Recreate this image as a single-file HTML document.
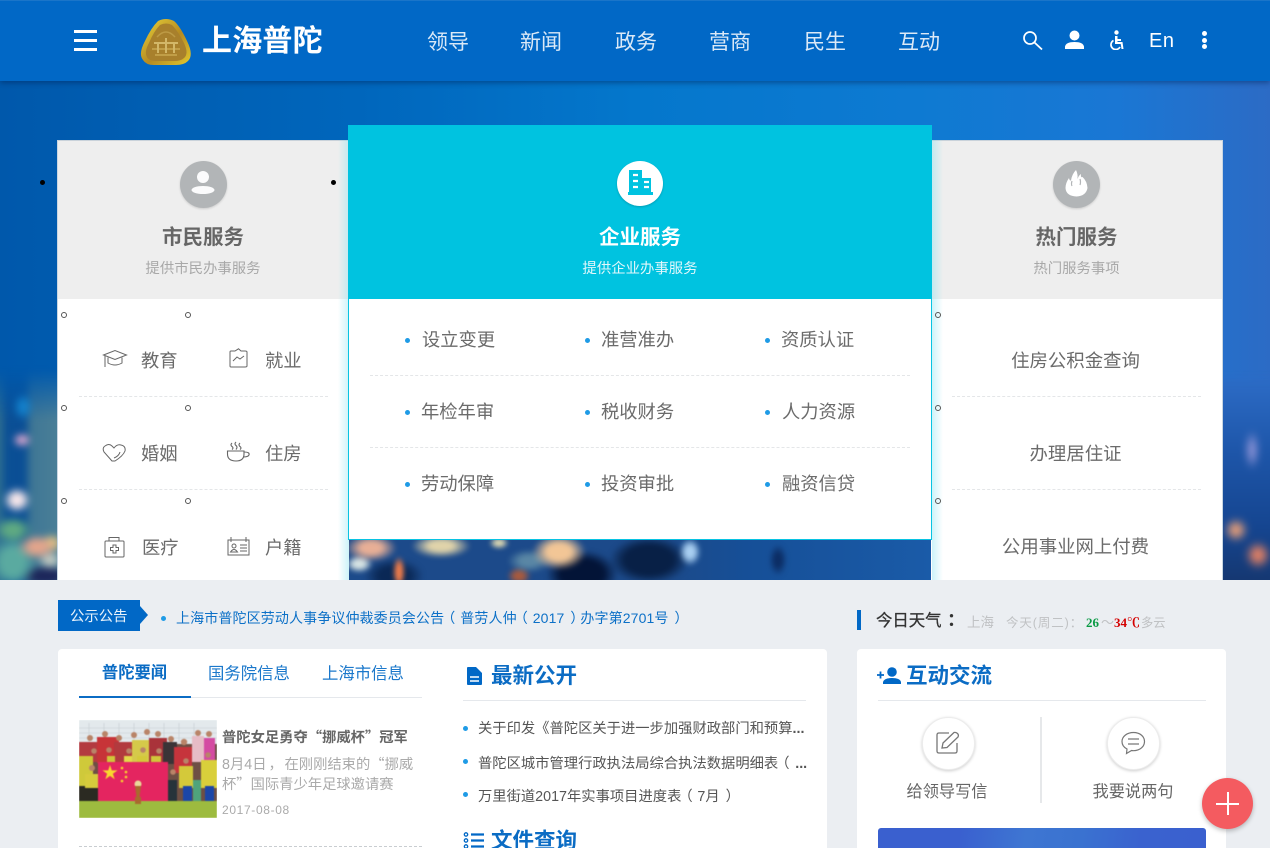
<!DOCTYPE html>
<html lang="zh"><head><meta charset="utf-8"><title>上海普陀</title>
<style>
*{box-sizing:border-box;margin:0;padding:0}
html,body{width:1270px;height:848px;overflow:hidden;background:#ebeef2}
body{position:relative;font-family:"Liberation Sans","Noto Sans CJK SC",sans-serif;color:#6b6b6b}
.a{position:absolute;white-space:nowrap;line-height:1.2}
.c{text-align:center}
svg{position:absolute;display:block}
.dash{position:absolute;height:0;border-top:1px dashed #e4e6e8}
.blt{position:absolute;width:5px;height:5px;border-radius:50%;background:#1f9be6}
.ring{position:absolute;width:6px;height:6px;border:1.4px solid #555;border-radius:50%}
.dot{position:absolute;width:5px;height:5px;border-radius:50%;background:#000}
.q{font-family:"Noto Sans CJK SC",sans-serif}
.lp,.rp{display:inline-block;width:16px;font-family:"Noto Sans CJK SC",sans-serif}
.lp{transform:translateX(-3px)}
.rp{transform:translateX(6px)}
</style></head><body>

<!-- hero -->
<div style="position:absolute;left:0;top:0;width:1270px;height:580px;overflow:hidden;background:linear-gradient(90deg,#0058ab 0%,#0066bc 28%,#0477cc 50%,#0e7ad2 72%,#1a77d4 88%,#2c6bc5 100%)">
 <!-- left city -->
 <div style="position:absolute;left:-10px;top:340px;width:80px;height:250px;filter:blur(3.500px)">
  <div style="position:absolute;inset:0;background:linear-gradient(90deg,#2f6f92 0,#2a6a90 14%,#0a4f95 20%,#0a4e95 43%,#3f7795 52%,#4f8298 100%);-webkit-mask-image:linear-gradient(transparent 30px,#000 80px)"></div>
  <div style="position:absolute;inset:0;background:
   radial-gradient(ellipse 10px 8px at 32px 100px,rgba(215,165,205,1) 30%,transparent),
   radial-gradient(ellipse 14px 13px at 27px 160px,rgba(248,232,235,1) 40%,transparent),
   radial-gradient(ellipse 20px 13px at 47px 207px,rgba(228,165,140,1) 40%,transparent),
   radial-gradient(ellipse 12px 10px at 62px 203px,rgba(225,195,130,1) 30%,transparent),
   radial-gradient(ellipse 13px 10px at 60px 220px,rgba(200,205,195,.95) 30%,transparent),
   radial-gradient(ellipse 20px 14px at 23px 190px,rgba(95,170,130,1) 40%,transparent),
   radial-gradient(ellipse 24px 28px at 23px 222px,rgba(90,170,160,1) 50%,transparent),
   radial-gradient(ellipse 26px 11px at 55px 236px,rgba(28,38,90,1) 55%,transparent),
   radial-gradient(ellipse 10px 14px at 33px 67px,rgba(20,135,210,.9) 30%,transparent)"></div>
 </div>
 <!-- right city -->
 <div style="position:absolute;left:1216px;top:380px;width:64px;height:210px;filter:blur(4px);background:
  radial-gradient(ellipse 7px 20px at 36px 70px,rgba(155,155,220,.9) 30%,transparent),
  radial-gradient(ellipse 12px 12px at 20px 150px,rgba(235,160,120,1) 30%,transparent),
  radial-gradient(ellipse 13px 14px at 42px 175px,rgba(230,130,100,1) 30%,transparent),
  linear-gradient(180deg,#2c6bc5 0,#1d55a8 35%,#154590 70%,#15356c 100%)"></div>
 <!-- centre strip -->
 <div style="position:absolute;left:349px;top:536px;width:582px;height:44px;overflow:hidden;background:linear-gradient(90deg,#1c4a8a 0,#1c4a8a 55%,#164f97 68%,#1a5ba8 100%)">
  <div style="position:absolute;left:-10px;top:-10px;width:602px;height:64px;filter:blur(2.500px);background:
   radial-gradient(ellipse 26px 14px at 32px 22px,rgba(232,175,150,1) 40%,transparent),
   radial-gradient(ellipse 14px 9px at 20px 38px,rgba(215,228,228,1) 40%,transparent),
   radial-gradient(ellipse 6px 16px at 60px 46px,rgba(240,125,75,1) 50%,transparent),
   radial-gradient(ellipse 30px 12px at 102px 20px,rgba(225,212,170,1) 40%,transparent),
   radial-gradient(ellipse 10px 6px at 160px 17px,rgba(228,222,180,1) 40%,transparent),
   radial-gradient(ellipse 27px 18px at 220px 26px,rgba(242,198,150,1) 45%,transparent),
   radial-gradient(ellipse 22px 12px at 190px 35px,rgba(90,135,165,1) 40%,transparent),
   radial-gradient(ellipse 12px 9px at 180px 50px,rgba(170,90,60,1) 40%,transparent),
   radial-gradient(ellipse 11px 14px at 351px 26px,rgba(170,208,242,1) 40%,transparent),
   radial-gradient(ellipse 36px 24px at 243px 48px,rgba(3,20,55,1) 60%,transparent),
   radial-gradient(ellipse 40px 24px at 310px 34px,rgba(8,32,70,1) 60%,transparent),
   radial-gradient(ellipse 9px 16px at 439px 34px,rgba(12,45,100,1) 40%,transparent),
   radial-gradient(ellipse 30px 18px at 55px 50px,rgba(10,40,85,1) 50%,transparent)"></div>
 </div>
</div>

<!-- header -->
<div style="position:absolute;left:0;top:0;width:1270px;height:81px;background:#0168c6;box-shadow:0 2px 5px rgba(0,30,80,.45);border-top:1px solid #1a75c9"></div>
<div style="position:absolute;left:74px;top:30px;width:23px;height:3px;background:#fff"></div>
<div style="position:absolute;left:74px;top:39px;width:23px;height:3px;background:#fff"></div>
<div style="position:absolute;left:74px;top:48px;width:23px;height:3px;background:#fff"></div>

<svg style="left:140px;top:18px" width="52" height="48" viewBox="0 0 52 48">
 <defs><linearGradient id="g" x1="0" y1="0" x2="1" y2="1"><stop offset="0" stop-color="#e9d43a"/><stop offset=".55" stop-color="#b58a22"/><stop offset="1" stop-color="#e2c92e"/></linearGradient></defs>
 <path d="M18 3Q26-1 34 3Q40 8 47 23Q54 37 48 43Q44 47 36 47H14Q6 47 3 42Q-2 36 5 23Q11 10 18 3Z" fill="url(#g)"/>
 <path d="M20 7Q26 4 32 7Q38 13 44 25Q49 36 44 40Q41 43 34 43H17Q9 43 7 39Q4 34 9 25Q14 13 20 7Z" fill="#a8802c"/>
 <path d="M12 31H40M15 37H37" stroke="#c9a850" stroke-width="1.500" fill="none"/>
 <path d="M14 25H38M18 25V35M26 20V35M34 25V35" stroke="#d3b768" stroke-width="2" fill="none"/>
 <path d="M17 19Q26 9 35 19" stroke="#bd9a45" stroke-width="1.500" fill="none"/>
</svg>
<div class="a" style="left:202px;top:24px;font-size:30px;font-weight:700;color:#fff;letter-spacing:.2px">上海普陀</div>

<div class="a" style="left:427px;top:30px;font-size:21px;color:#dbe9f7">领导</div>
<div class="a" style="left:520px;top:30px;font-size:21px;color:#dbe9f7">新闻</div>
<div class="a" style="left:615px;top:30px;font-size:21px;color:#dbe9f7">政务</div>
<div class="a" style="left:709px;top:30px;font-size:21px;color:#dbe9f7">营商</div>
<div class="a" style="left:804px;top:30px;font-size:21px;color:#dbe9f7">民生</div>
<div class="a" style="left:898px;top:30px;font-size:21px;color:#dbe9f7">互动</div>

<svg style="left:1022px;top:30px" width="21" height="21" viewBox="0 0 21 21"><circle cx="8" cy="8" r="6" fill="none" stroke="#fff" stroke-width="1.700"/><path d="M12.500 12.500L20 19.500" stroke="#fff" stroke-width="1.800"/></svg>
<svg style="left:1064px;top:30px" width="21" height="20" viewBox="0 0 21 20"><circle cx="10.500" cy="5.500" r="5" fill="#fff"/><path d="M1 19V16.500Q2 12 10.500 12T20 16.500V19Z" fill="#fff"/></svg>
<svg style="left:1108px;top:30px" width="18" height="20" viewBox="0 0 18 20"><circle cx="8.500" cy="2.500" r="2.200" fill="#fff"/><path d="M7 6H9.500V9H13V11H9.500V12H14.500L15.500 19H13.500L12.700 14H7Z" fill="#fff"/><path d="M5.500 10.500A4.800 4.800 0 1 0 12 17" fill="none" stroke="#fff" stroke-width="1.700"/></svg>
<div class="a" style="left:1149px;top:29px;font-size:20px;color:#fff;letter-spacing:.5px">En</div>
<div style="position:absolute;left:1202px;top:31px;width:5px;height:5px;border-radius:50%;background:#fff"></div>
<div style="position:absolute;left:1202px;top:38px;width:5px;height:5px;border-radius:50%;background:#fff"></div>
<div style="position:absolute;left:1202px;top:44px;width:5px;height:5px;border-radius:50%;background:#fff"></div>

<!-- left card -->
<div style="position:absolute;left:57px;top:140px;width:292px;height:440px;background:#fff;border-left:1px solid #c9d6e2;border-top:1px solid #c9d2da"><div style="height:158px;background:#eeeeee"></div></div>
<div style="position:absolute;left:338px;top:140px;width:11px;height:440px;background:linear-gradient(90deg,rgba(150,220,235,0),rgba(130,225,240,.4))"></div>
<div class="dot" style="left:40px;top:180px"></div><div class="dot" style="left:331px;top:180px"></div>
<div style="position:absolute;left:180px;top:161px;width:47px;height:47px;border-radius:50%;background:#b2b5b7;box-shadow:0 1px 2px rgba(0,0,0,.15)"></div>
<svg style="left:190px;top:170px" width="26" height="26" viewBox="0 0 26 26"><circle cx="13" cy="7" r="6" fill="#fff" opacity=".95"/><ellipse cx="13" cy="20" rx="11.500" ry="4" fill="#fff" opacity=".95"/></svg>
<div class="a c" style="left:57px;top:226px;width:292px;font-size:20.500px;font-weight:700;color:#666">市民服务</div>
<div class="a c" style="left:57px;top:261px;width:292px;font-size:14.400px;color:#a8a8a8">提供市民办事服务</div>

<div class="ring" style="left:61px;top:312px"></div><div class="ring" style="left:185px;top:312px"></div>
<div class="ring" style="left:61px;top:405px"></div><div class="ring" style="left:185px;top:405px"></div>
<div class="ring" style="left:61px;top:498px"></div><div class="ring" style="left:185px;top:498px"></div>
<div class="dash" style="left:79px;top:396px;width:249px"></div>
<div class="dash" style="left:79px;top:489px;width:249px"></div>

<svg style="left:102px;top:349px" width="26" height="20" viewBox="0 0 26 20" fill="none" stroke="#666" stroke-width="1"><path d="M1.500 6L13 1.500L24.500 6L13 10.500Z"/><path d="M6 8.500V14Q13 18 20 14V8.500"/><path d="M3 7V18"/></svg>
<div class="a" style="left:141px;top:350px;font-size:18.300px">教育</div>
<svg style="left:229px;top:348px" width="19" height="21" viewBox="0 0 19 21" fill="none" stroke="#666" stroke-width="1"><path d="M6 3H2Q1 3 1 4V18Q1 19 2 19H16Q18 19 18 18V4Q18 3 16 3H12L9.500 .8Z"/><path d="M4 13L8 9L11 11L15 8"/></svg>
<div class="a" style="left:265px;top:350px;font-size:18.300px">就业</div>

<svg style="left:102px;top:443px" width="25" height="20" viewBox="0 0 25 20" fill="none" stroke="#666" stroke-width="1"><path d="M10 18L2 9Q0 5 3 3Q7 0 10 3L12 5Q15 1 19 2Q24 3 23 8Q21 13 13 18Z"/><path d="M18 9Q17 13 12 15"/></svg>
<div class="a" style="left:141px;top:443px;font-size:18.300px">婚姻</div>
<svg style="left:226px;top:441px" width="25" height="22" viewBox="0 0 25 22" fill="none" stroke="#666" stroke-width="1.100"><path d="M1.500 10H18V13Q18 20 10 20Q1.500 20 1.500 13Z"/><path d="M18 11Q24 11 23 14Q22 16 17 16"/><path d="M6 2Q4 4 6 5.500T6 8.500M10 1Q8 3 10 4.500T10 8.500M14 2Q12 4 14 5.500T14 8.500"/></svg>
<div class="a" style="left:265px;top:443px;font-size:18.300px">住房</div>

<svg style="left:104px;top:536px" width="21" height="22" viewBox="0 0 21 22" fill="none" stroke="#666" stroke-width="1"><rect x="1" y="5" width="19" height="16" rx="1"/><path d="M5 5V1.500H15V5"/><path d="M9 9H12V11.500H14.500V14.500H12V17H9V14.500H6.500V11.500H9Z"/></svg>
<div class="a" style="left:142px;top:537px;font-size:18.300px">医疗</div>
<svg style="left:227px;top:536px" width="23" height="20" viewBox="0 0 23 20" fill="none" stroke="#666" stroke-width="1"><rect x="1" y="4" width="21" height="15"/><path d="M4 1V6M19 1V6"/><circle cx="7" cy="10" r="2"/><path d="M3.500 16Q7 11 10.500 16Z"/><path d="M13 9H20M13 12H20M13 15H20"/></svg>
<div class="a" style="left:265px;top:537px;font-size:18.300px">户籍</div>

<!-- right card -->
<div style="position:absolute;left:931px;top:140px;width:292px;height:440px;background:#fff;border-right:1px solid #c9d6e2;border-top:1px solid #c9d2da"><div style="height:158px;background:#eeeeee"></div></div>
<div style="position:absolute;left:932px;top:140px;width:11px;height:440px;background:linear-gradient(270deg,rgba(150,220,235,0),rgba(130,225,240,.4))"></div>
<div style="position:absolute;left:1053px;top:161px;width:47px;height:47px;border-radius:50%;background:#b2b5b7;box-shadow:0 1px 2px rgba(0,0,0,.15)"></div>
<svg style="left:1063px;top:169px" width="27" height="29" viewBox="0 0 27 29"><path d="M13 1Q15 5 14.500 10Q16 6 18 5Q17.500 9 19.500 8Q24 12 24.500 19Q23 27 13.500 27.500Q3 27 2.500 19Q2.500 14 6 9Q6.500 12 8 11.500Q9 5 13 1Z" fill="#fff"/><path d="M9 12Q8 15 9 17M17 10Q18 13 17 16" stroke="#b2b5b7" stroke-width="1.200" fill="none"/></svg>
<div class="a c" style="left:931px;top:226px;width:291px;font-size:20.500px;font-weight:700;color:#666">热门服务</div>
<div class="a c" style="left:931px;top:261px;width:291px;font-size:14.400px;color:#a8a8a8">热门服务事项</div>
<div class="ring" style="left:935px;top:312px"></div><div class="ring" style="left:935px;top:405px"></div><div class="ring" style="left:935px;top:498px"></div>
<div class="dash" style="left:952px;top:396px;width:249px"></div>
<div class="dash" style="left:952px;top:489px;width:249px"></div>
<div class="a c" style="left:930px;top:350px;width:291px;font-size:18.400px">住房公积金查询</div>
<div class="a c" style="left:930px;top:443px;width:291px;font-size:18.400px">办理居住证</div>
<div class="a c" style="left:930px;top:536px;width:291px;font-size:18.400px">公用事业网上付费</div>

<!-- center card -->
<div style="position:absolute;left:348px;top:125px;width:584px;height:415px;background:#fff;border:1px solid #09c3e2;border-top:0"><div style="height:174px;margin:0 -1px;background:#00c3e0"></div></div>
<div style="position:absolute;left:617px;top:161px;width:46px;height:45px;border-radius:50%;background:#fff;box-shadow:0 1px 2px rgba(0,0,0,.2)"></div>
<svg style="left:628px;top:169px" width="25" height="26" viewBox="0 0 25 26"><path d="M1 1H14V9H23V23H25V26H0V23H1Z" fill="#00c3e0"/><path d="M5 6H10M5 12H10M5 18H10M16 13H21M16 18H21" stroke="#fff" stroke-width="2.200"/></svg>
<div class="a c" style="left:348px;top:226px;width:584px;font-size:20.500px;font-weight:700;color:#fff">企业服务</div>
<div class="a c" style="left:348px;top:261px;width:584px;font-size:14.400px;color:#e2f7fb">提供企业办事服务</div>
<div class="dash" style="left:370px;top:375px;width:540px"></div>
<div class="dash" style="left:370px;top:447px;width:540px"></div>

<div class="blt" style="left:405px;top:338px"></div><div class="a" style="left:422px;top:329px;font-size:18.300px">设立变更</div>
<div class="blt" style="left:585px;top:338px"></div><div class="a" style="left:601px;top:329px;font-size:18.300px">准营准办</div>
<div class="blt" style="left:765px;top:338px"></div><div class="a" style="left:781px;top:329px;font-size:18.300px">资质认证</div>
<div class="blt" style="left:405px;top:410px"></div><div class="a" style="left:421px;top:401px;font-size:18.300px">年检年审</div>
<div class="blt" style="left:585px;top:410px"></div><div class="a" style="left:601px;top:401px;font-size:18.300px">税收财务</div>
<div class="blt" style="left:765px;top:410px"></div><div class="a" style="left:782px;top:401px;font-size:18.300px">人力资源</div>
<div class="blt" style="left:405px;top:482px"></div><div class="a" style="left:421px;top:473px;font-size:18.300px">劳动保障</div>
<div class="blt" style="left:585px;top:482px"></div><div class="a" style="left:601px;top:473px;font-size:18.300px">投资审批</div>
<div class="blt" style="left:765px;top:482px"></div><div class="a" style="left:782px;top:473px;font-size:18.300px">融资信贷</div>

<!-- notice -->
<div style="position:absolute;left:58px;top:600px;width:82px;height:31px;background:#0168c6"></div>
<div style="position:absolute;left:140px;top:606px;border-left:8px solid #0168c6;border-top:9px solid transparent;border-bottom:9px solid transparent"></div>
<div class="a" style="left:70px;top:609px;font-size:14.400px;color:#e8f2fb">公示公告</div>
<div class="blt" style="left:161px;top:616px"></div>
<div class="a" style="left:176px;top:610px;font-size:14px;color:#0c70c7;letter-spacing:.12px">上海市普陀区劳动人事争议仲裁委员会公告<span class="lp">（</span>普劳人仲<span class="lp">（</span>2017<span class="rp">）</span>办字第2701号<span class="rp">）</span></div>

<!-- weather -->
<div style="position:absolute;left:857px;top:610px;width:4px;height:20px;background:#0168c6"></div>
<div class="a" style="left:876px;top:612px;font-size:16.400px;color:#333;-webkit-text-stroke:.3px #333">今日天气</div>
<div class="a" style="left:947px;top:610px;font-size:18px;font-weight:700;color:#333">：</div>
<div class="a" style="left:967px;top:615px;font-size:13.500px;color:#c0c2c4">上海</div>
<div class="a" style="left:1006px;top:616px;font-size:12.500px;color:#c0c2c4;letter-spacing:.9px">今天(周二)：</div>
<div class="a" style="left:1086px;top:615px;font-size:13px;font-weight:700;color:#0a9a45;font-family:'Liberation Serif',serif">26</div>
<div class="a" style="left:1101px;top:615px;font-size:13px;color:#c0c2c4">～</div>
<div class="a" style="left:1114px;top:615px;font-size:13px;font-weight:700;color:#d40000;font-family:'Liberation Serif','Noto Serif CJK SC',serif">34℃</div>
<div class="a" style="left:1141px;top:616px;font-size:12.300px;color:#c0c2c4">多云</div>

<!-- panel 1 -->
<div style="position:absolute;left:58px;top:649px;width:769px;height:220px;background:#fff;border-radius:4px"></div>
<div class="a c" style="left:79px;top:664px;width:111px;font-size:16.300px;font-weight:700;color:#0b6cc4">普陀要闻</div>
<div class="a" style="left:208px;top:665px;font-size:16.400px;color:#1b78cb">国务院信息</div>
<div class="a" style="left:322px;top:665px;font-size:16.400px;color:#1b78cb">上海市信息</div>
<div style="position:absolute;left:79px;top:697px;width:343px;height:1px;background:#e5e8ec"></div>
<div style="position:absolute;left:79px;top:696px;width:112px;height:2px;background:#0b6cc4"></div>

<div style="position:absolute;left:79px;top:720px;width:138px;height:98px;overflow:hidden">
<svg style="left:0;top:0;filter:blur(.6px)" width="138" height="98" viewBox="0 0 138 98">
 <rect width="138" height="98" fill="#e3e9ec"/>
 <g stroke="#c4ccd0" stroke-width=".6"><path d="M0 8H138M0 13H138M0 18H138M10 3V30M25 3V30M40 3V30M55 3V30M70 3V30M85 3V30M100 3V30M115 3V30"/></g>
 <rect x="0" y="24" width="138" height="58" fill="#6e4f44"/>
 <rect x="0" y="22" width="18" height="20" fill="#b33a40"/>
 <rect x="18" y="17" width="22" height="26" fill="#c73438"/>
 <rect x="35" y="22" width="18" height="24" fill="#b23a3e"/>
 <rect x="53" y="20" width="18" height="24" fill="#d5c94a"/>
 <rect x="70" y="18" width="18" height="24" fill="#a9333a"/>
 <rect x="84" y="22" width="14" height="22" fill="#3a3437"/>
 <rect x="95" y="27" width="18" height="26" fill="#c6343c"/>
 <rect x="113" y="16" width="12" height="26" fill="#e6bcc6"/>
 <rect x="125" y="18" width="11" height="24" fill="#d44ba2"/>
 <rect x="0" y="36" width="14" height="30" fill="#cfc93a"/>
 <rect x="0" y="66" width="19" height="16" fill="#2b2a22"/>
 <rect x="6" y="54" width="13" height="14" fill="#d6cb3c"/>
 <rect x="100" y="46" width="14" height="22" fill="#d4c93a"/>
 <rect x="122" y="40" width="16" height="28" fill="#d9cf3b"/>
 <rect x="114" y="60" width="8" height="22" fill="#4fa37c"/>
 <rect x="104" y="66" width="9" height="15" fill="#1b46a8"/>
 <rect x="126" y="66" width="9" height="15" fill="#1b46a8"/>
 <rect x="89" y="60" width="9" height="22" fill="#26333a"/>
 <rect x="28" y="36" width="8" height="8" fill="#d0c63a"/><rect x="45" y="36" width="8" height="8" fill="#e3d84a"/><rect x="58" y="36" width="10" height="8" fill="#d4c93a"/><rect x="72" y="36" width="10" height="8" fill="#d0c63a"/>
 <g fill="#b98468"><circle cx="11" cy="18" r="3"/><circle cx="26" cy="14" r="3"/><circle cx="40" cy="18" r="3"/><circle cx="55" cy="15" r="3"/><circle cx="68" cy="12" r="3"/><circle cx="79" cy="14" r="3"/><circle cx="92" cy="19" r="3"/><circle cx="105" cy="22" r="3.200"/><circle cx="119" cy="13" r="3"/><circle cx="130" cy="14" r="3"/><circle cx="15" cy="31" r="2.800"/><circle cx="30" cy="30" r="2.800"/><circle cx="50" cy="31" r="2.800"/><circle cx="64" cy="30" r="2.800"/><circle cx="80" cy="31" r="2.800"/><circle cx="107" cy="41" r="2.800"/><circle cx="129" cy="35" r="2.800"/><circle cx="13" cy="48" r="3"/><circle cx="94" cy="52" r="2.800"/></g>
 <rect x="19" y="42" width="70" height="39" fill="#e42560"/>
 <path d="M31 45l1.800 5.400h5.700l-4.600 3.400 1.800 5.400-4.700-3.300-4.700 3.300 1.800-5.400-4.600-3.400h5.700z" fill="#f8d72e"/>
 <g fill="#f8d72e"><circle cx="43" cy="48" r="1.300"/><circle cx="47" cy="52" r="1.300"/><circle cx="47" cy="57" r="1.300"/><circle cx="43" cy="61" r="1.300"/></g>
 <rect y="81" width="138" height="17" fill="#9dbb3f"/>
 <circle cx="59" cy="64" r="3.500" fill="#e8d79a"/>
 <path d="M56 66H62L60.500 77H62V84H56V77H57.500Z" fill="#a86a2e"/>
</svg></div>
<div class="a" style="left:222px;top:728px;font-size:14.300px;font-weight:700;color:#666">普陀女足勇夺<span class="q">“</span>挪威杯<span class="q">”</span>冠军</div>
<div class="a" style="left:222px;top:755px;font-size:14.300px;color:#aaa">8月4日<span class="lp" style="width:18px;transform:translateX(2px)">，</span>在刚刚结束的<span class="q">“</span>挪威</div>
<div class="a" style="left:222px;top:775px;font-size:14.300px;color:#aaa">杯<span class="q">”</span>国际青少年足球邀请赛</div>
<div class="a" style="left:222px;top:803px;font-size:12px;color:#aaa;letter-spacing:.65px">2017-08-08</div>
<div style="position:absolute;left:79px;top:846px;width:343px;border-top:1px dashed #c9cdd1"></div>

<svg style="left:467px;top:667px" width="15" height="18" viewBox="0 0 15 18"><path d="M0 1Q0 0 1 0H9L15 6V17Q15 18 14 18H1Q0 18 0 17Z" fill="#0168c6"/><path d="M3 10H12M3 14H12" stroke="#fff" stroke-width="1.600"/></svg>
<div class="a" style="left:491px;top:664px;font-size:21.500px;font-weight:700;color:#0b6cc4">最新公开</div>
<div style="position:absolute;left:463px;top:700px;width:343px;height:1px;background:#e5e8ec"></div>
<div class="blt" style="left:463px;top:726px"></div>
<div class="a" style="left:478px;top:721px;font-size:14.300px;color:#555">关于印发《普陀区关于进一步加强财政部门和预算<b>...</b></div>
<div class="blt" style="left:463px;top:759px"></div>
<div class="a" style="left:478px;top:754px;font-size:14.300px;color:#555">普陀区城市管理行政执法局综合执法数据明细表<span class="lp" style="width:17px">（</span><b>...</b></div>
<div class="blt" style="left:463px;top:792px"></div>
<div class="a" style="left:478px;top:787px;font-size:14.300px;color:#555">万里街道2017年实事项目进度表<span class="lp">（</span>7月<span class="rp">）</span></div>

<svg style="left:463px;top:832px" width="22" height="18" viewBox="0 0 22 18"><g fill="none" stroke="#0168c6" stroke-width="1.300"><circle cx="3" cy="2.500" r="1.700"/><circle cx="3" cy="8.500" r="1.700"/><circle cx="3" cy="14.500" r="1.700"/></g><path d="M8 2.500H21M8 8.500H21M8 14.500H21" stroke="#0168c6" stroke-width="2.300"/></svg>
<div class="a" style="left:491px;top:829px;font-size:21.500px;font-weight:700;color:#0b6cc4">文件查询</div>

<!-- panel 2 -->
<div style="position:absolute;left:857px;top:649px;width:369px;height:220px;background:#fff;border-radius:4px"></div>
<svg style="left:877px;top:667px" width="24" height="18" viewBox="0 0 24 18"><circle cx="15" cy="5" r="4.800" fill="#0168c6"/><path d="M6 17V15Q7 11 15 11T24 15V17Z" fill="#0168c6"/><path d="M0 8H7M3.500 4.500V11.500" stroke="#0168c6" stroke-width="1.800"/></svg>
<div class="a" style="left:906px;top:664px;font-size:21.500px;font-weight:700;color:#0b6cc4">互动交流</div>
<div style="position:absolute;left:878px;top:700px;width:328px;height:1px;background:#e5e8ec"></div>
<div style="position:absolute;left:1040px;top:717px;width:2px;height:86px;background:#e6e8ea"></div>
<div style="position:absolute;left:922px;top:717px;width:53px;height:53px;border-radius:50%;background:#fff;border:1px solid #ececec;box-shadow:0 1px 3px rgba(0,0,0,.2)"></div>
<svg style="left:936px;top:731px" width="25" height="25" viewBox="0 0 25 25" fill="none" stroke="#777" stroke-width="1.300"><path d="M13 2H3Q1 2 1 4V20Q1 22 3 22H19Q21 22 21 20V12"/><path d="M6 17L7 12L18 1.500Q20 1 21.500 2.500Q23 4 22 6L11 16.500Z"/></svg>
<div style="position:absolute;left:1107px;top:717px;width:53px;height:53px;border-radius:50%;background:#fff;border:1px solid #ececec;box-shadow:0 1px 3px rgba(0,0,0,.2)"></div>
<svg style="left:1121px;top:731px" width="25" height="24" viewBox="0 0 25 24" fill="none" stroke="#777" stroke-width="1.200"><path d="M12.500 1.500C6 1.500 1 5.500 1 10.500C1 14 3 16.500 6 18L5.500 22.500L10.500 19.500Q11.500 19.700 12.500 19.700C19 19.700 23.500 15.500 23.500 10.500S19 1.500 12.500 1.500Z"/><path d="M7 8H18M7 13H18"/></svg>
<div class="a c" style="left:892px;top:783px;width:110px;font-size:16.200px;color:#666">给领导写信</div>
<div class="a c" style="left:1078px;top:783px;width:110px;font-size:16.200px;color:#666">我要说两句</div>
<div style="position:absolute;left:878px;top:828px;width:328px;height:20px;border-radius:3px 3px 0 0;background:linear-gradient(100deg,#3a60cf 0,#3a60cf 25%,#3e76d2 45%,#3a72d0 62%,#3a62cf 80%,#3a60cf 100%)"></div>

<!-- fab -->
<div style="position:absolute;left:1202px;top:778px;width:51px;height:51px;border-radius:50%;background:#f45b60;box-shadow:0 2px 5px rgba(0,0,0,.25)"></div>
<div style="position:absolute;left:1216px;top:803px;width:23px;height:2px;background:#fff"></div>
<div style="position:absolute;left:1227px;top:792px;width:2px;height:23px;background:#fff"></div>
</body></html>
